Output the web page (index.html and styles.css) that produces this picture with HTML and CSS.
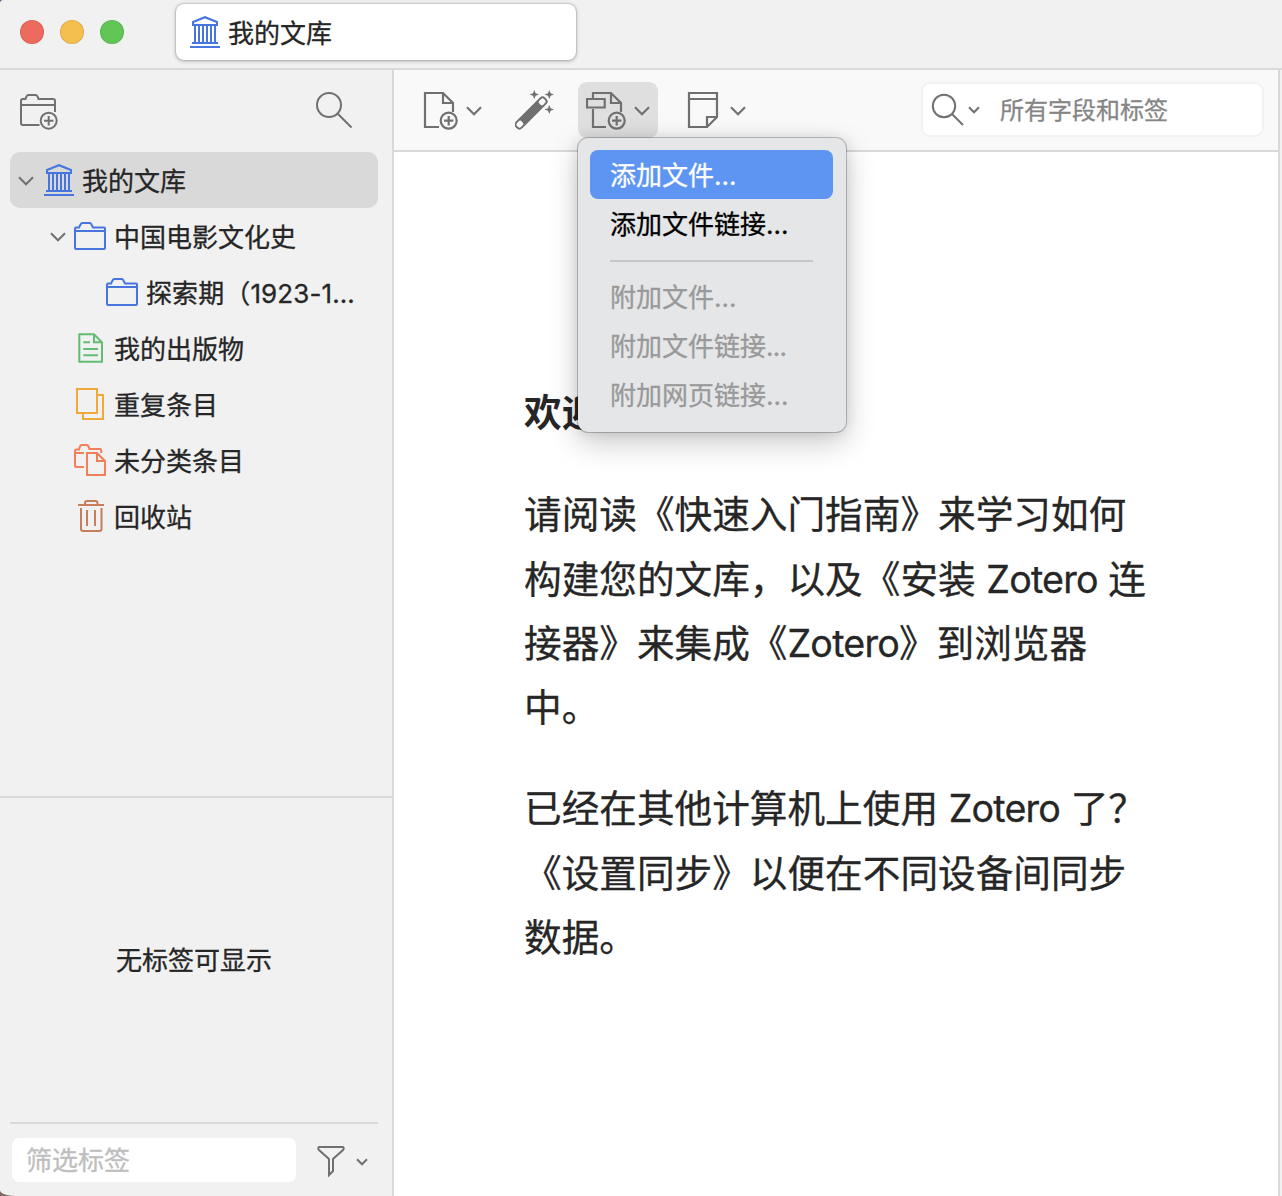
FILE: index.html
```html
<!DOCTYPE html>
<html lang="zh-CN">
<head>
<meta charset="utf-8">
<title>我的文库</title>
<link rel="stylesheet" href="styles.css">
</head>
<body>
<svg class="defs" width="0" height="0" aria-hidden="true">
  <symbol id="library" viewBox="0 0 30 32"><path d="M0 31H30M2 27H28M2 9H28M5 10V26M9 10V26M13 10V26M17 10V26M21 10V26M25 10V26M3 9V6L15 1.2L27 6V9"/></symbol>
  <symbol id="folder" viewBox="0 0 32 28"><path d="M1 26V6.5Q1 5.5 2 5.5H5Q6 3.500 7 1.800Q7.500 1 8.500 1H15.500Q16.500 1 17 1.800L19 5.500H30Q31 5.500 31 6.500V26Q31 27 30 27H2Q1 27 1 26ZM1 9H31"/></symbol>
  <symbol id="chevron" viewBox="0 0 16 10"><path d="M1 1.300L8 8.300L15 1.300"/></symbol>
  <symbol id="chevron-small" viewBox="0 0 12 8"><path d="M1 1.300L6 6.300L11 1.300"/></symbol>
</svg>
<div class="window">
  <header class="titlebar">
    <div class="lights"><i class="red"></i><i class="yellow"></i><i class="green"></i></div>
    <div class="tab"><svg class="blue" width="30" height="32"><use href="#library"/></svg><span>我的文库</span></div>
  </header>
  <div class="main">
    <aside class="sidebar">
      <div class="collections">
        <div class="side-tools">
          <svg width="39" height="37" viewBox="0 0 39 37"><path d="M19.500 31H3Q1 31 1 29V7Q1 5 3 5H5.500Q6.500 1 8.500 1H15.500Q17.500 1 18.500 5H33Q35 5 35 7V18M1 11H35"/><circle cx="28.700" cy="26.700" r="8"/><path d="M28.700 22V31.400M24 26.700H33.400"/></svg>
          <svg width="38" height="38" viewBox="0 0 38 38"><circle cx="14" cy="14" r="12"/><path d="M22.500 22.500L36.500 36.500"/></svg>
        </div>
        <ul class="tree">
          <li class="selected"><svg class="twisty" width="16" height="10"><use href="#chevron"/></svg><svg class="blue library" width="30" height="32"><use href="#library"/></svg><span>我的文库</span></li>
          <li class="level-1"><svg class="twisty" width="16" height="10"><use href="#chevron"/></svg><svg class="blue" width="32" height="28"><use href="#folder"/></svg><span>中国电影文化史</span></li>
          <li class="level-2"><svg class="blue" width="32" height="28"><use href="#folder"/></svg><span>探索期（1923-1...</span></li>
          <li class="special"><svg class="mint" width="32" height="32" viewBox="0 0 32 32"><path d="M5.300 2.300H20L28 10.300V29.700H5.300ZM20 2.300V10.300H28M9.300 10.300H16M9.300 17H24M9.300 23.300H24"/></svg><span>我的出版物</span></li>
          <li class="special"><svg class="amber" width="32" height="32" viewBox="0 0 32 32"><path d="M3 1H23V25H3ZM23 7H29V31H9V25"/></svg><span>重复条目</span></li>
          <li class="special"><svg class="orange" width="32" height="32" viewBox="0 0 32 32"><path d="M10 23H2.500Q1 23 1 21.500V7Q1 5.500 2.500 5.500H5Q6 1 8 1H12.500Q14.500 1 15.500 5H26Q27.200 5 27.200 7V9M1 9H10M13 9H23L31 17V31H13ZM23 9V17H31"/></svg><span>未分类条目</span></li>
          <li class="special"><svg class="rust" width="32" height="32" viewBox="0 0 32 32"><path d="M4 5H30M11 5V3Q11 1 13 1H21.500Q23.500 1 23.500 3V5M7 8V29Q7 31 9 31H25.500Q27.500 31 27.500 29V8M13 10V26M21 10V26"/></svg><span>回收站</span></li>
        </ul>
      </div>
      <div class="tags">
        <p>无标签可显示</p>
        <div class="tag-filter">
          <div class="filter-input">筛选标签</div>
          <svg class="funnel" width="28" height="32" viewBox="0 0 28 32"><path d="M2 1H26Q27.500 2.200 26 4L16 13V25L12 29V13L2 4Q.500 2.200 2 1Z"/></svg>
          <svg class="funnel-arrow" width="12" height="8"><use href="#chevron-small"/></svg>
        </div>
      </div>
    </aside>
    <section class="content">
      <div class="toolbar">
        <div class="tool new-item">
          <svg width="36" height="39" viewBox="0 0 36 39"><path d="M16 36H2V2H20L30 12V21M20 2V12H30"/><circle cx="25.700" cy="29.700" r="8"/><path d="M25.700 25V34.400M21 29.700H30.400"/></svg>
          <svg width="16" height="10"><use href="#chevron"/></svg>
        </div>
        <svg class="wand" width="40" height="41" viewBox="0 0 40 41"><g transform="translate(16 23) rotate(-45)"><rect x="-20" y="-3.700" width="40" height="7.400" rx="3"/><path class="solid" d="M-14-4H14Q11 0 14 4H-14Q-11 0-14-4Z"/></g><path class="solid" d="M19.300 0L20.600 3.200L24 4.500L20.600 5.800L19.300 9L18 5.800L14.600 4.500L18 3.200ZM34.300 0L35.600 3.200L39 4.500L35.600 5.800L34.300 9L33 5.800L29.600 4.500L33 3.200ZM34.300 15L35.600 18.200L39 19.500L35.600 20.800L34.300 24L33 20.800L29.600 19.500L33 18.200Z"/></svg>
        <div class="tool active">
          <svg width="40" height="39" viewBox="0 0 40 39"><path d="M20 36H7V18M7 7V2H25L35 12V21M25 2V12H35M1 8H18.700V16.500H1Z"/><circle cx="30.700" cy="29.700" r="8"/><path d="M30.700 25V34.400M26 29.700H35.400"/></svg>
          <svg width="16" height="10"><use href="#chevron"/></svg>
          <div class="menu">
            <div class="item highlighted">添加文件...</div>
            <div class="item">添加文件链接...</div>
            <hr>
            <div class="item disabled">附加文件...</div>
            <div class="item disabled tight">附加文件链接<span>...</span></div>
            <div class="item disabled">附加网页链接...</div>
          </div>
        </div>
        <div class="tool note">
          <svg width="32" height="38" viewBox="0 0 32 38"><path d="M2 2H30V26L20 36H2ZM2 8H30M20 36V26H30"/></svg>
          <svg width="16" height="10"><use href="#chevron"/></svg>
        </div>
        <div class="search">
          <svg width="34" height="34" viewBox="0 0 34 34"><circle cx="13" cy="13" r="11.200"/><path d="M21 21L32 32"/></svg>
          <svg width="12" height="8"><use href="#chevron-small"/></svg>
          <span>所有字段和标签</span>
        </div>
      </div>
      <article class="welcome">
        <h1>欢迎</h1>
        <p>请阅读《快速入门指南》来学习如何<br>构建您的文库，以及《安装 <span class="latin">Zotero</span> 连<br>接器》来集成《<span class="latin">Zotero</span>》到浏览器<br>中。</p>
        <p>已经在其他计算机上使用 <span class="latin">Zotero</span> 了？<br>《设置同步》以便在不同设备间同步<br>数据。</p>
      </article>
    </section>
  </div>
</div>
</body>
</html>
```

FILE: styles.css
```css
* { box-sizing: border-box; }
html, body { margin: 0; height: 100%; }
body {
  background: linear-gradient(#32507f 50%, #806a65 50%);
  font-family: Inter, "Noto Sans CJK SC", sans-serif;
  font-size: 26px;
  color: #262626;
  -webkit-text-stroke: .3px;
  overflow: hidden;
}
.defs { position: absolute; }
svg { display: block; flex: none; fill: none; stroke: #707070; stroke-width: 2; }
.solid { fill: #707070; stroke: none; }
.blue { stroke: #4675e0; }
.mint { stroke: #62bd72; }
.amber { stroke: #f1a93b; }
.orange { stroke: #f17f57; }
.rust { stroke: #c77c5a; }

.window {
  display: flex;
  flex-direction: column;
  width: 1282px;
  height: 1196px;
  background: #f1f1f1;
  border-radius: 3px 0 0 15px / 3px 0 0 6px;
  overflow: hidden;
}
.titlebar {
  display: flex;
  flex: none;
  height: 70px;
  padding: 4px 0 0 20px;
  border-bottom: 2px solid #d9d9d9;
}
.lights { display: flex; gap: 16px; width: 156px; padding-top: 16px; }
.lights i { width: 24px; height: 24px; border-radius: 50%; border: 1px solid rgba(0,0,0,.1); }
.red { background: #ed6a5f; }
.yellow { background: #f5bf4f; }
.green { background: #62c655; }
.tab {
  display: flex;
  align-items: center;
  gap: 8px;
  width: 400px;
  height: 56px;
  padding-left: 14px;
  background: #fff;
  border-radius: 8px;
  box-shadow: 0 0 2px rgba(0,0,0,.35), 0 1px 4px rgba(0,0,0,.25);
}
.tab span { padding-bottom: 2px; }

.main { display: flex; flex: 1; min-height: 0; }
.sidebar { display: flex; flex-direction: column; flex: none; width: 394px; border-right: 2px solid #d9d9d9; }
.collections { height: 728px; border-bottom: 2px solid #d9d9d9; }
.side-tools { display: flex; justify-content: space-between; padding: 21px 39px 0 20px; height: 82px; }
.side-tools svg:first-child { margin-top: 3px; }
.tree { margin: 0 14px 0 10px; padding: 0; list-style: none; }
.tree li { display: flex; align-items: center; height: 56px; padding-left: 8px; border-radius: 10px; white-space: nowrap; }
.tree span { margin-left: 8px; padding-bottom: 2px; }
.tree .selected { background: #d9d9d9; }
.tree .twisty { margin: 1px 8px 0 0; }
.selected .library { margin-left: 2px; }
.tree .level-1 { padding-left: 40px; }
.tree .level-2 { padding-left: 96px; }
.level-2 span { letter-spacing: .1px; }
.tree .special { padding-left: 64px; }

.tags { display: flex; flex: 1; flex-direction: column; padding: 0 14px 0 10px; }
.tags p { flex: 1; margin: 0; display: flex; align-items: center; justify-content: center; padding-bottom: 4px; }
.tag-filter { display: flex; align-items: center; height: 74px; padding: 0 10px 0 2px; border-top: 2px solid #d9d9d9; }
.filter-input { width: 284px; height: 44px; margin-right: 21px; padding-left: 14px; line-height: 46px; background: #fff; border-radius: 7px; color: #bebebe; }
.funnel { margin: 3px 11px 0 0; }
.funnel-arrow { margin-top: 3px; }

.content { display: flex; flex: none; flex-direction: column; width: 886px; background: #fff; border-right: 2px solid #d9d9d9; }
.toolbar { display: flex; flex: none; align-items: flex-start; height: 82px; padding: 12px 14px 0 20px; background: #f9f9f9; border-bottom: 2px solid #d9d9d9; }
.tool { position: relative; display: flex; align-items: center; height: 56px; padding: 0 8px; }
.tool > svg { stroke-width: 2.200; }
.tool > svg:nth-child(2) { margin-top: 2px; }
.new-item { width: 80px; gap: 7px; padding-left: 9px; }
.wand { margin: 8px 23px 0 21px; }
.active { width: 80px; gap: 8px; padding: 0 0 0 8px; background: #dfdfdf; border-radius: 9px; }
.note { gap: 10px; padding-left: 29px; }
.note svg:nth-child(2) { margin-left: 1px; }
.search {
  display: flex;
  align-items: center;
  width: 343px;
  height: 55px;
  margin-left: auto;
  padding-left: 8px;
  background: #fff;
  border: 2px solid #f2f2f2;
  border-radius: 9px;
  font-size: 24px;
  color: #858585;
}
.search svg:nth-child(2) { margin: 0 20px 0 3px; }
.search span { padding-bottom: 2px; }

.menu {
  position: absolute;
  z-index: 2;
  top: 56px;
  left: 0;
  width: 268px;
  height: 294px;
  padding: 12px 13px 12px 12px;
  background: #e5e6e8;
  border-radius: 10px;
  box-shadow: 0 0 0 1px rgba(0,0,0,.22), 0 10px 30px rgba(0,0,0,.22), 0 0 14px rgba(0,0,0,.1);
  color: #000;
}
.item { height: 49px; padding-left: 20px; line-height: 52px; border-radius: 8px; white-space: nowrap; }
.highlighted { background: #5e95f3; color: #fff; }
.disabled { color: #999; }
.tight span { letter-spacing: -.7px; }
.menu hr { height: 2px; margin: 12px 20px 10px; border: 0; background: #c5c6c8; }

.welcome { padding: 229px 0 0 130px; font-size: 37.650px; line-height: 64.350px; white-space: nowrap; }
.welcome h1 { margin: 0 0 38px; font-size: inherit; font-weight: 700; -webkit-text-stroke: 0; }
.welcome p { margin: 0 0 36.500px; }
.latin { letter-spacing: -.8px; }
```
